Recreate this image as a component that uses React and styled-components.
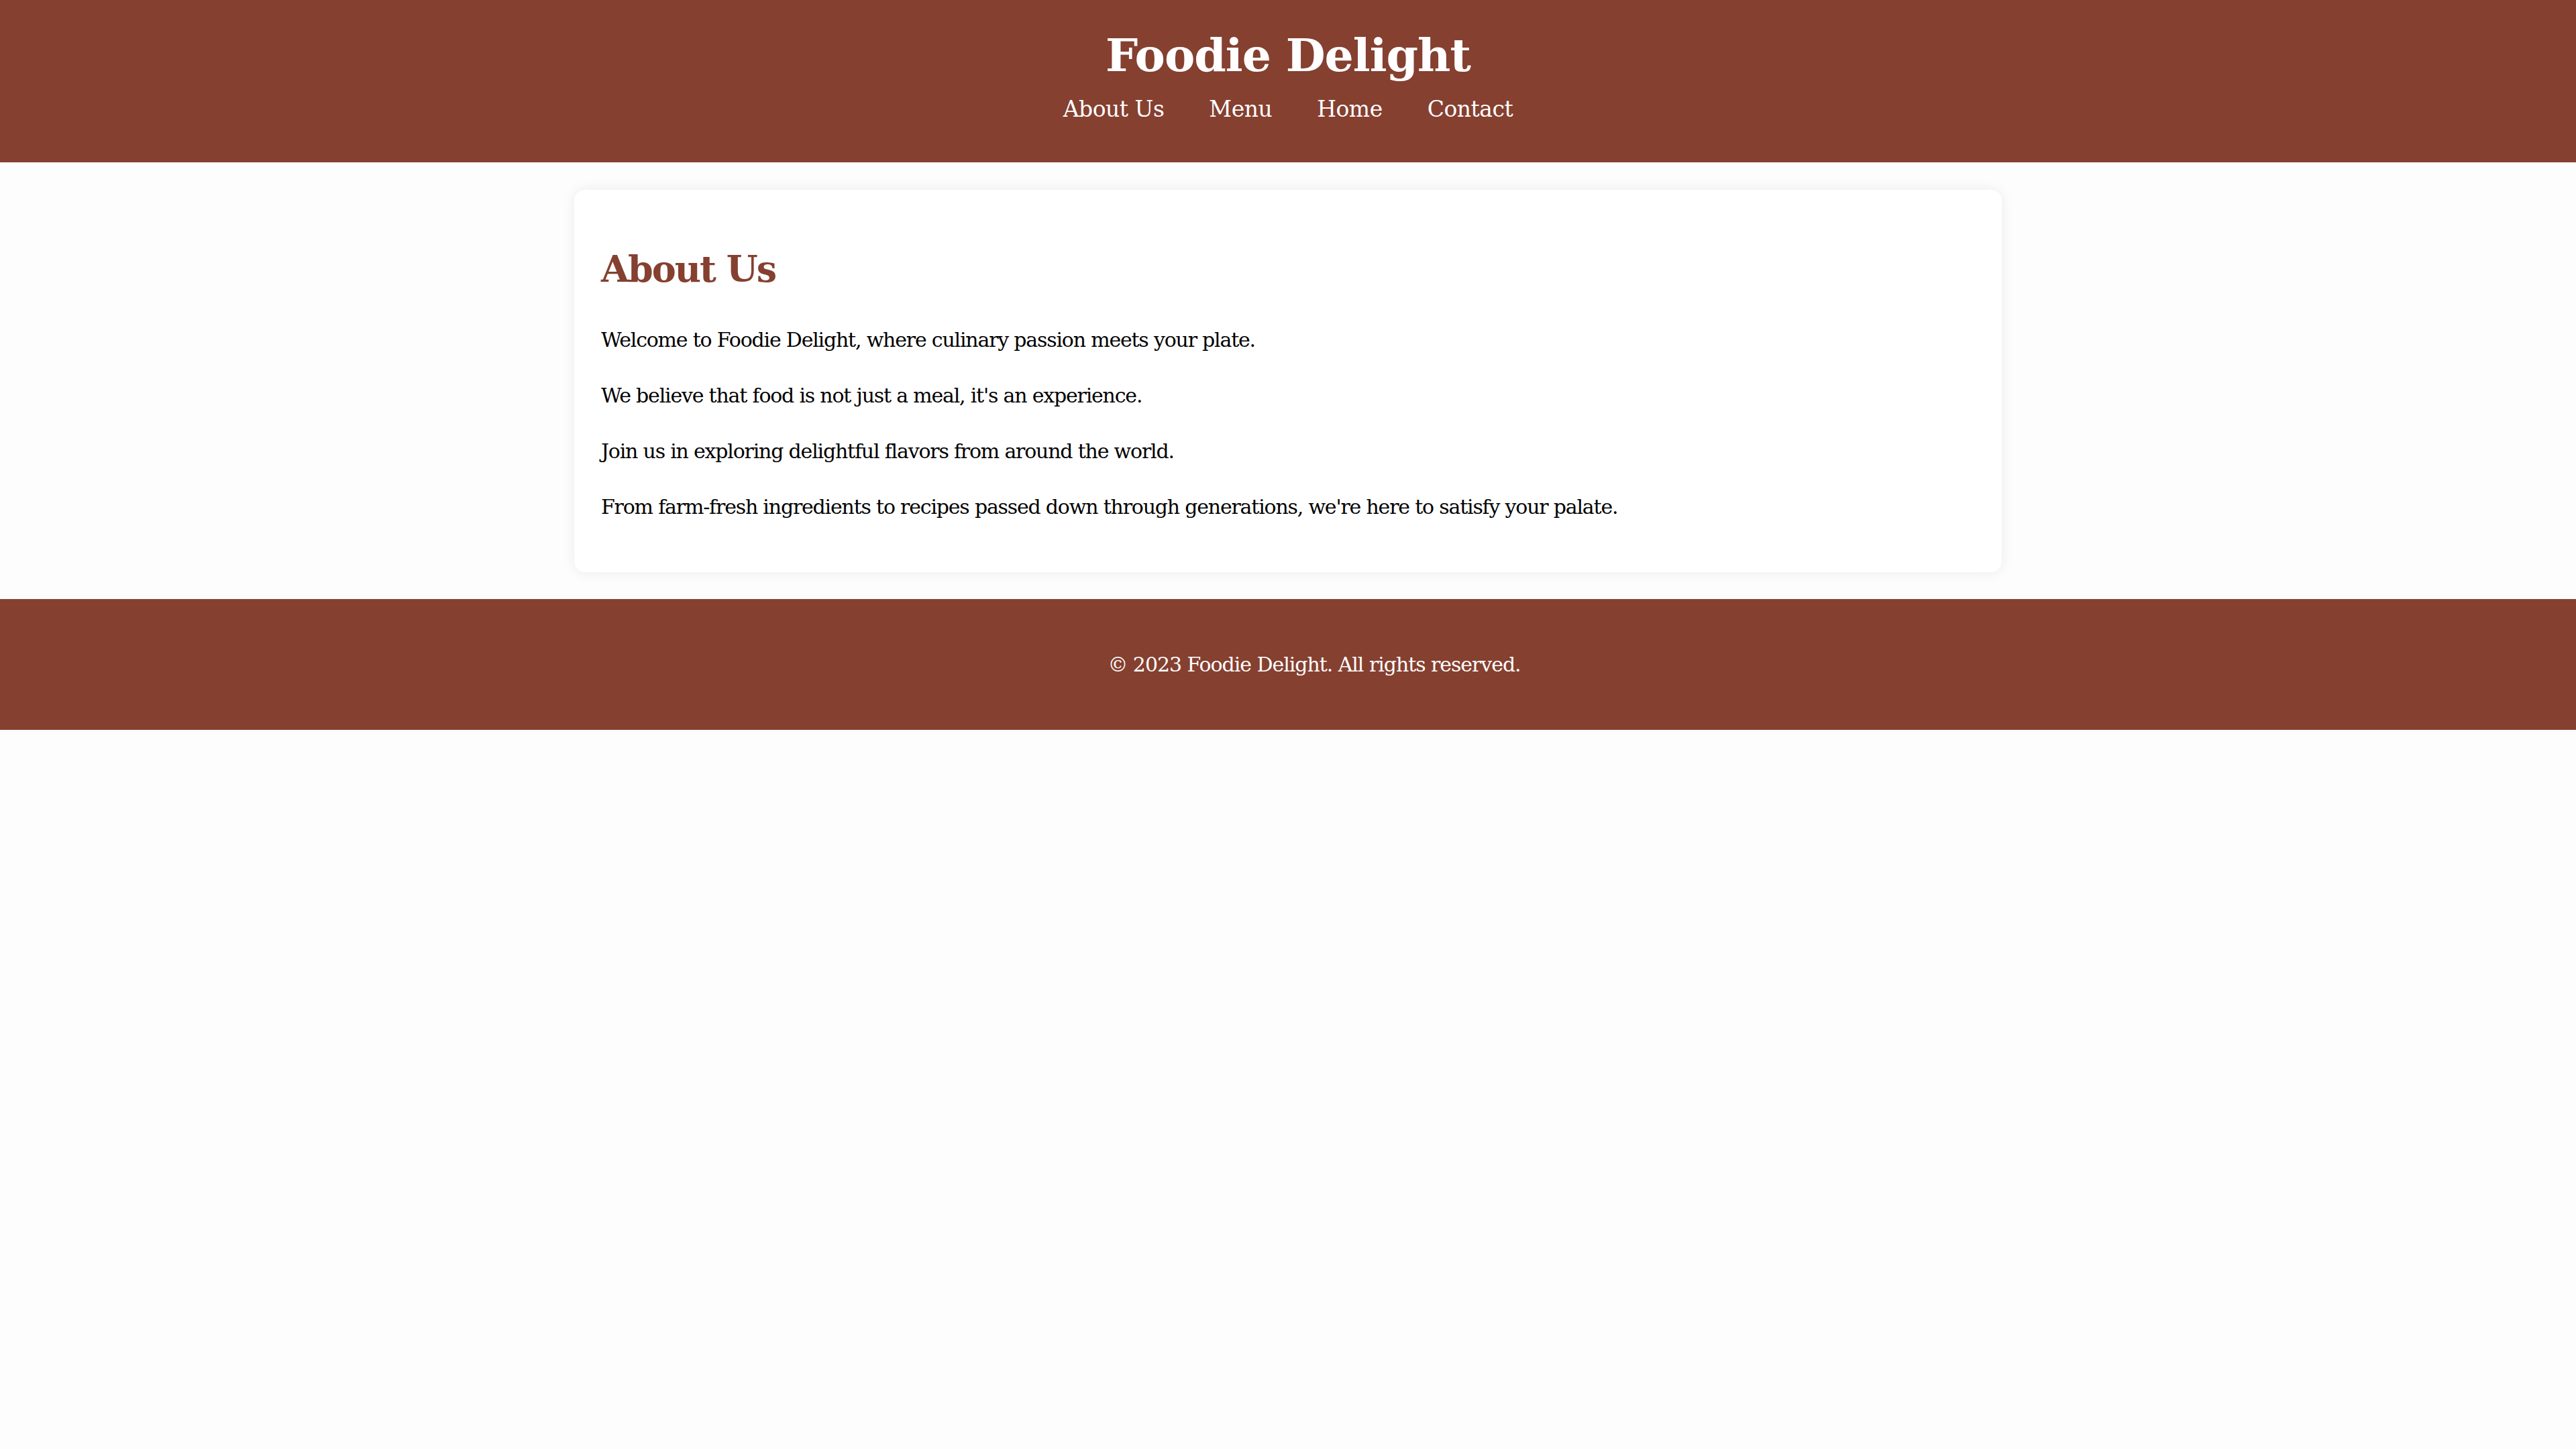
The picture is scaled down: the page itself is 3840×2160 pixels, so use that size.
import React from "react";
import styled, { createGlobalStyle } from "styled-components";

const GlobalStyle = createGlobalStyle`
  html, body {
    margin: 0;
    padding: 0;
    background: #fdfdfd;
  }
  body {
    font-family: "DejaVu Serif", "Liberation Serif", Georgia, serif;
    color: #000;
  }
  * { box-sizing: border-box; }
`;

const BRAND = "#854030";

const Header = styled.header`
  background: ${BRAND};
  color: #fff;
  padding: 42px 0 59px;
  display: flex;
  flex-direction: column;
  align-items: center;
`;

const Title = styled.h1`
  margin: 0 0 21px;
  font-size: 68px;
  line-height: 80px;
  font-weight: 700;
  letter-spacing: -1px;
`;

const Nav = styled.nav`
  display: flex;
  gap: 67px;
`;

const NavLink = styled.a`
  color: #fff;
  text-decoration: none;
  font-size: 33px;
  line-height: 40px;
  letter-spacing: -0.5px;
`;

const Main = styled.main`
  padding: 41px 0 40px;
`;

const Card = styled.section`
  max-width: 2128px;
  margin: 0 auto;
  background: #fff;
  border-radius: 16px;
  box-shadow: 0 0 20px rgba(0, 0, 0, 0.08);
  padding: 86px 40px 72px;
  display: flex;
  flex-direction: column;
`;

const Heading = styled.h2`
  margin: 0 0 48px;
  color: ${BRAND};
  font-size: 54px;
  line-height: 64px;
  font-weight: 700;
  letter-spacing: -2px;
`;

const Paragraph = styled.p`
  margin: 0;
  font-size: 30px;
  line-height: 51px;
  letter-spacing: -1.2px;
  & + & {
    margin-top: 32px;
  }
`;

const Footer = styled.footer`
  background: ${BRAND};
  color: #fff;
  padding: 78px 0 77px 78px;
  text-align: center;
`;

const FooterText = styled.p`
  margin: 0;
  font-size: 30px;
  line-height: 40px;
  letter-spacing: -1.05px;
`;

const links = ["About Us", "Menu", "Home", "Contact"];
const paragraphs = [
  "Welcome to Foodie Delight, where culinary passion meets your plate.",
  "We believe that food is not just a meal, it's an experience.",
  "Join us in exploring delightful flavors from around the world.",
  "From farm-fresh ingredients to recipes passed down through generations, we're here to satisfy your palate.",
];

export default function App() {
  return (
    <>
      <GlobalStyle />
      <Header>
        <Title>Foodie Delight</Title>
        <Nav>
          {links.map((l) => (
            <NavLink key={l} href="#">
              {l}
            </NavLink>
          ))}
        </Nav>
      </Header>
      <Main>
        <Card>
          <Heading>About Us</Heading>
          {paragraphs.map((p) => (
            <Paragraph key={p}>{p}</Paragraph>
          ))}
        </Card>
      </Main>
      <Footer>
        <FooterText>© 2023 Foodie Delight. All rights reserved.</FooterText>
      </Footer>
    </>
  );
}
